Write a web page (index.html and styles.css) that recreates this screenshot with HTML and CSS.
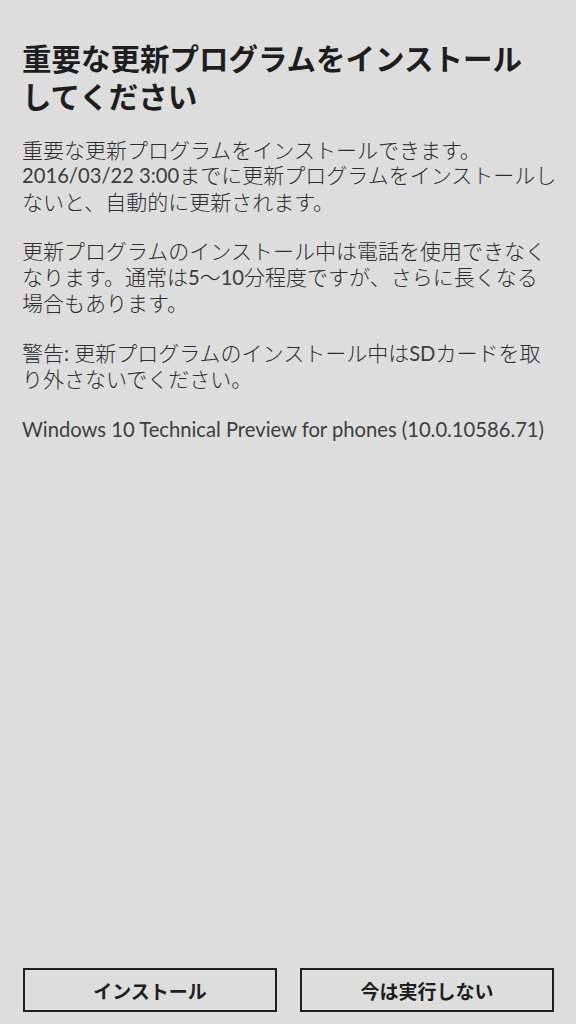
FILE: index.html
```html
<!DOCTYPE html>
<html lang="ja">
<head>
<meta charset="utf-8">
<link rel="stylesheet" href="styles.css">
</head>
<body>
<div class="screen">
  <h1 class="title">重要な更新プログラムをインストールしてください</h1>
  <div class="content">
    <p class="para">重要な更新プログラムをインストールできます。<span class="latin">2016/03/22 3:00</span>までに更新プログラムをインストールしないと、自動的に更新されます。</p>
    <p class="para">更新プログラムのインストール中は電話を使用できなくなります。通常は<span class="latin">5</span>～<span class="latin">10</span>分程度ですが、さらに長くなる場合もあります。</p>
    <p class="para">警告<span class="latin">: </span>更新プログラムのインストール中は<span class="latin">SD</span>カードを取り外さないでください。</p>
    <p class="para"><span class="latin">Windows 10 Technical Preview for phones (10.0.10586.71)</span></p>
  </div>
  <div class="actions">
    <button class="btn">インストール</button>
    <button class="btn">今は実行しない</button>
  </div>
</div>
</body>
</html>
```

FILE: styles.css
```css
html, body {
  margin: 0;
  padding: 0;
  background: #dddddd;
}
.screen {
  box-sizing: border-box;
  width: 576px;
  height: 1024px;
  display: flex;
  flex-direction: column;
  padding: 38px 22px 12px 22px;
  font-family: Lato, "Noto Sans CJK JP", sans-serif;
}
.title {
  margin: 0;
  font-family: "Noto Sans CJK JP", sans-serif;
  font-size: 29.5px;
  line-height: 38px;
  font-weight: 600;
  color: #1e1e1e;
  width: 520px;
}
.content {
  margin-top: 23px;
}
.para {
  margin: 0 0 24.5px 0;
  font-size: 21px;
  line-height: 25.3px;
  font-weight: 300;
  color: #2e2e2e;
  width: 536px;
}
.latin {
  font-size: 20.2px;
  line-height: 25.3px;
  font-weight: 400;
  color: #3e3e3e;
}
.actions {
  margin-top: auto;
  display: flex;
  gap: 23px;
  padding-left: 1px;
}
.btn {
  flex: 1;
  height: 44px;
  background: transparent;
  border: 2px solid #1e1e1e;
  font-family: "Noto Sans CJK JP", sans-serif;
  font-size: 19px;
  font-weight: 700;
  color: #1e1e1e;
  padding: 0;
}
```
